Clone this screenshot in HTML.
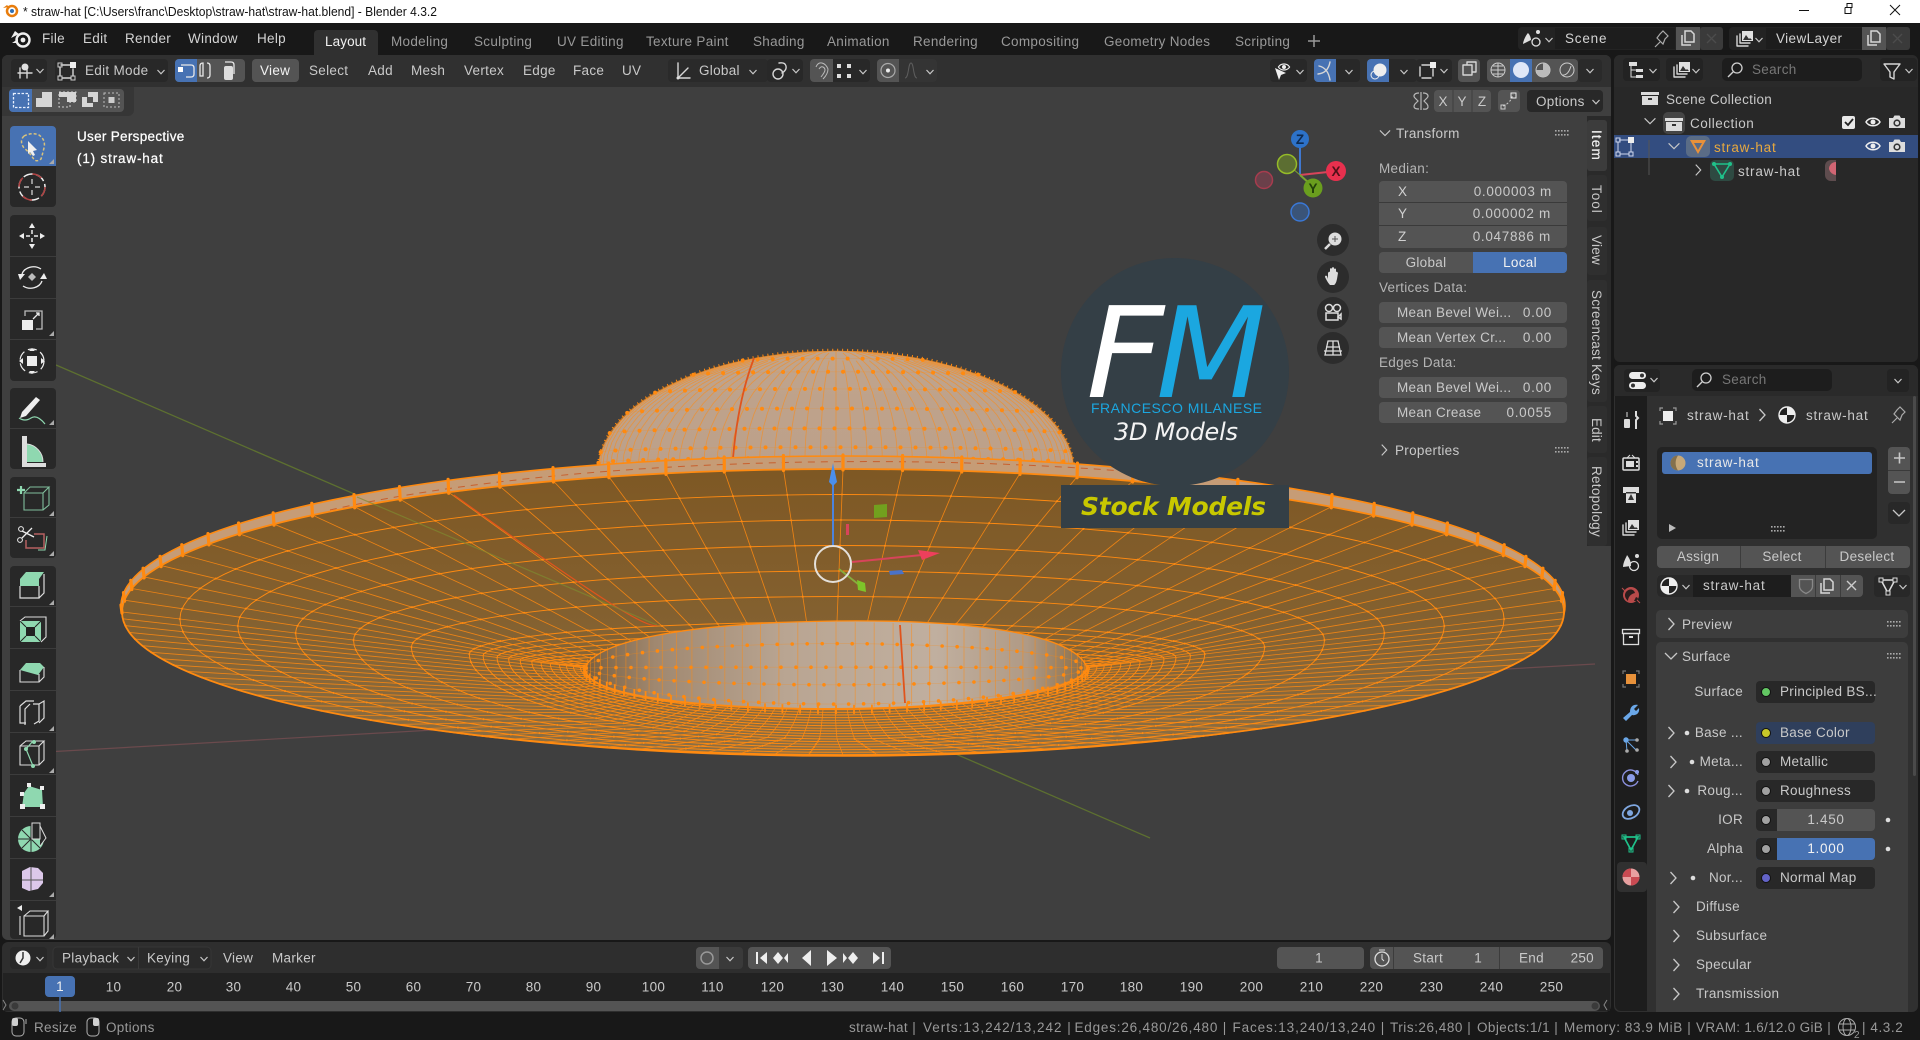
<!DOCTYPE html>
<html><head><meta charset="utf-8"><title>straw-hat - Blender 4.3.2</title>
<style>
html,body{margin:0;padding:0;background:#181818;width:1920px;height:1040px;overflow:hidden}
svg{display:block}
text{font-family:"Liberation Sans",sans-serif;font-size:13.5px;letter-spacing:.3px;fill:#c9c9c9;white-space:pre}
.e{text-anchor:end}.m{text-anchor:middle}
.w{fill:#f2f2f2}.d{fill:#999}.s{fill:#777}
.b{fill:#545454}.k{fill:#282828}.f{fill:#1d1d1d}
.ic{fill:none;stroke:#d6d6d6;stroke-width:1.4;stroke-linejoin:round;stroke-linecap:round}
.ft{fill:#e0e0e0;stroke:none}
.g{fill:#8fd8b0;stroke:none}
</style></head><body>
<svg xmlns="http://www.w3.org/2000/svg" width="1920" height="1040" viewBox="0 0 1920 1040">
<defs>
<path id="cd" d="M-3.5-2 0 1.8 3.5-2" fill="none" stroke="#c8c8c8" stroke-width="1.2"/>
<path id="cr" d="M-2.5-6 3 0-2.5 6" fill="none" stroke="#c8c8c8" stroke-width="1.3"/>
<path id="cv" d="M-6-3 0 3 6-3" fill="none" stroke="#c8c8c8" stroke-width="1.3"/>
<g id="grip" fill="#aaa"><rect x="0" y="0" width="1.6" height="1.6"/><rect x="3" y="0" width="1.6" height="1.6"/><rect x="6" y="0" width="1.6" height="1.6"/><rect x="9" y="0" width="1.6" height="1.6"/><rect x="12" y="0" width="1.6" height="1.6"/><rect x="0" y="4" width="1.6" height="1.6"/><rect x="3" y="4" width="1.6" height="1.6"/><rect x="6" y="4" width="1.6" height="1.6"/><rect x="9" y="4" width="1.6" height="1.6"/><rect x="12" y="4" width="1.6" height="1.6"/></g>
<g id="copy"><path d="M-6-3v10h9M-3-7h6l3 3v8h-9z" fill="none" stroke="#d6d6d6" stroke-width="1.5"/></g>
<g id="box"><path d="M-9-6h18v3h-18z" fill="#dcdcdc"/><path d="M-8-2h16v9h-16z" fill="#dcdcdc"/><rect x="-2" y="0" width="4" height="2" fill="#333"/></g>
<g id="mat"><circle r="8" fill="#eee"/><path d="M0-8A8 8 0 0 0-8 0H0V8A8 8 0 0 0 8 0H0Z" fill="#222"/><circle r="8" fill="none" stroke="#eee" stroke-width="1.4"/></g>
<g id="pin"><path d="M-7 8-2 3M-5-1 1 5 3 0 6-3 1-8-2-5Z" fill="none" stroke="#aaa" stroke-width="1.2"/></g>
<g id="layers"><path class="ic" d="M-8-3v10h11M-5-5v9h10" stroke-width="1.3"/><rect x="-3" y="-8" width="11" height="10" fill="#e0e0e0"/><path d="M-2 1 1-4 4 0 5-1 7 1Z" fill="#333"/></g>
<g id="eye"><path d="M-7 0C-4-5 4-5 7 0 4 5-4 5-7 0Z" fill="none" stroke="#eee" stroke-width="1.5"/><circle r="2.5" fill="#eee"/></g>
<g id="cam"><path d="M-8-4h4l1.500-2.500h5L4-4h4V6H-8Z" fill="#ddd"/><circle cy="1" r="3.600" fill="#333"/><circle cy="1" r="2" fill="#ddd"/></g>
<g id="filter"><path class="ic" d="M-8-7H8L2 1V8L-2 6V1Z" stroke-width="1.300"/></g>
<g id="search"><circle cx="2" cy="-2" r="5" fill="none" stroke="#d0d0d0" stroke-width="1.300"/><path d="M-2 2-7 7" stroke="#d0d0d0" stroke-width="1.400"/></g>
<g id="corner"><path d="M0 5 5 5 5 0Z" fill="#aaa"/></g>
<linearGradient id="hole" x1="0" x2="1" y1="0" y2="0"><stop offset="0" stop-color="#7a5f3e"/><stop offset=".14" stop-color="#a08870"/><stop offset=".4" stop-color="#b9a592"/><stop offset=".7" stop-color="#c0af9f"/><stop offset=".88" stop-color="#b09a85"/><stop offset="1" stop-color="#8a6d46"/></linearGradient>
<linearGradient id="under" x1="0" x2="0" y1="0" y2="1"><stop offset="0" stop-color="#7e5824"/><stop offset=".5" stop-color="#83602f"/><stop offset="1" stop-color="#8c6f45"/></linearGradient>
<linearGradient id="dome" x1="0" x2="0" y1="0" y2="1"><stop offset="0" stop-color="#c0a48c"/><stop offset="1" stop-color="#bca08a"/></linearGradient>
</defs>

<!-- base -->
<rect width="1920" height="1040" fill="#181818"/>
<rect width="1920" height="23" fill="#fff"/>
<circle cx="12" cy="11" r="5" fill="none" stroke="#e87d0d" stroke-width="2.500"/><circle cx="12" cy="11" r="2" fill="#2f6fb5"/><path d="M3 8 9 7 7 5Z" fill="#e87d0d"/>
<text x="23" y="16" style="fill:#111;font-size:13px;letter-spacing:0" textLength="414" lengthAdjust="spacingAndGlyphs">* straw-hat [C:\Users\franc\Desktop\straw-hat\straw-hat.blend] - Blender 4.3.2</text>
<path d="M1799 10.500h10" stroke="#111"/><path d="M1845 7.500h7v-4h-5v4M1845 7.500v6h6v-6" fill="none" stroke="#111"/><path d="M1890 5 1900 15M1900 5 1890 15" stroke="#111"/>

<!-- top bar -->
<g transform="translate(21 39)"><circle cx="2" cy="1" r="6.500" fill="none" stroke="#eee" stroke-width="2.400"/><circle cx="2" cy="1" r="2.400" fill="#eee"/><path d="M-10-1-2-5-6-8ZM-9 4-3 0-3 4Z" fill="#eee"/></g>
<text x="42" y="43" style="fill:#d4d4d4">File</text><text x="83" y="43" style="fill:#d4d4d4">Edit</text><text x="125" y="43" style="fill:#d4d4d4">Render</text><text x="188" y="43" style="fill:#d4d4d4">Window</text><text x="257" y="43" style="fill:#d4d4d4">Help</text>
<path d="M314 55V34a4 4 0 0 1 4-4h56a4 4 0 0 1 4 4v21z" fill="#303030"/>
<text x="325" y="46" class="w" style="letter-spacing:.1px">Layout</text>
<g class="tabs"><text x="391" y="46" class="d">Modeling</text><text x="474" y="46" class="d">Sculpting</text><text x="557" y="46" class="d">UV Editing</text><text x="646" y="46" class="d">Texture Paint</text><text x="753" y="46" class="d">Shading</text><text x="827" y="46" class="d">Animation</text><text x="913" y="46" class="d">Rendering</text><text x="1001" y="46" class="d">Compositing</text><text x="1104" y="46" class="d">Geometry Nodes</text><text x="1235" y="46" class="d">Scripting</text></g>
<path d="M1308 41h12M1314 35v12" stroke="#999" stroke-width="1.500"/>
<!-- scene -->
<rect x="1518" y="27" width="205" height="23" rx="4" fill="#232323"/><rect x="1555" y="28" width="120" height="21" class="f"/><rect x="1676" y="27" width="24" height="23" class="b"/><rect x="1700" y="27" width="23" height="23" rx="3" fill="#3a3a3a"/>
<path d="M1523 44c0-3 3-9 5-11 2 2 3 5 3 7" fill="#e0e0e0"/><circle cx="1536" cy="42" r="4" fill="none" stroke="#e0e0e0" stroke-width="1.300"/><circle cx="1538" cy="32" r="2" fill="#e0e0e0"/><use href="#cd" x="1549" y="40"/>
<text x="1565" y="43" style="fill:#d4d4d4;letter-spacing:.8px">Scene</text><use href="#pin" x="1662" y="39"/><use href="#copy" x="1688" y="38"/><path d="M1707 34 1716 43M1716 34 1707 43" stroke="#4c4c4c" stroke-width="1.400"/>
<rect x="1729" y="27" width="181" height="23" rx="4" fill="#232323"/><rect x="1766" y="28" width="96" height="21" class="f"/><rect x="1862" y="27" width="24" height="23" class="b"/><rect x="1886" y="27" width="24" height="23" rx="3" fill="#3a3a3a"/>
<use href="#layers" x="1745" y="39"/><use href="#cd" x="1759" y="40"/><text x="1776" y="43" style="fill:#d4d4d4;letter-spacing:.4px">ViewLayer</text><use href="#copy" x="1874" y="38"/><path d="M1893 34 1902 43M1902 34 1893 43" stroke="#4c4c4c" stroke-width="1.400"/>

<!-- viewport -->
<rect x="2" y="55" width="1609" height="885" rx="6" fill="#3f3f3f"/>
<path d="M2 87V61a6 6 0 0 1 6-6H1605a6 6 0 0 1 6 6V87Z" fill="#303030"/>
<!-- axis lines -->
<path d="M56 365 1150 838" stroke="#5d7030" stroke-width="1.300"/><path d="M46 752 1595 664" stroke="#6b4a4d" stroke-width="1.200"/>
<g id="hat"></g>
<!-- object gizmo -->
<g id="gizmo">
<path d="M833 546V480" stroke="#4b83dd" stroke-width="2"/><path d="M833 463 837 482 833 486 829 482Z" fill="#4b8fec"/>
<path d="M852 562 922 555" stroke="#d8445a" stroke-width="2"/><path d="M918 550 940 553 922 560Z" fill="#ee3f5c"/>
<path d="M839 569 858 584" stroke="#87ac3d" stroke-width="1.800"/><path d="M857 580 865 583 866 592 858 590Z" fill="#7ec429"/>
<ellipse cx="833" cy="564" rx="18" ry="18" fill="none" stroke="#e4e0da" stroke-width="2"/>
<path d="M874 505 887 504 887 517 874 518Z" fill="#72a01e"/><rect x="846" y="524" width="3" height="11" fill="#d8445a"/><path d="M889 571 902 570 904 574 890 575Z" fill="#4a72c8"/>
</g>
<!-- FM logo -->
<circle cx="1175" cy="372" r="114" fill="#343f46"/><rect x="1061" y="485" width="228" height="43" fill="#343f46"/>
<text x="1086" y="397" style="font-family:'DejaVu Sans',sans-serif;font-style:italic;font-size:126px;letter-spacing:0;fill:#fff" textLength="78" lengthAdjust="spacingAndGlyphs">F</text>
<text x="1156" y="397" style="font-family:'DejaVu Sans',sans-serif;font-style:italic;font-size:126px;letter-spacing:0;fill:#1ba7e0" textLength="110" lengthAdjust="spacingAndGlyphs">M</text>
<text x="1091" y="413" style="font-size:14px;letter-spacing:1px;fill:#1ba7e0" textLength="172">FRANCESCO MILANESE</text>
<text x="1114" y="440" style="font-family:'DejaVu Sans',sans-serif;font-style:italic;font-size:24px;letter-spacing:0;fill:#f4f4f4" textLength="124">3D Models</text>
<text x="1081" y="515" style="font-family:'DejaVu Sans',sans-serif;font-style:italic;font-weight:bold;font-size:25px;letter-spacing:0;fill:#c8c800" textLength="185">Stock Models</text>

<!-- viewport header -->
<rect x="11" y="59" width="36" height="23" rx="4" class="k"/>
<g transform="translate(24 70)"><path class="ic" d="M-6 3H8M-4-2V8M3-2V8" stroke-width="1"/><circle cx="1" cy="-3" r="3.500" fill="#e0e0e0"/></g><use href="#cd" x="40" y="71"/>
<rect x="55" y="59" width="113" height="23" rx="4" class="k"/>
<g transform="translate(67 71)"><path class="ic" d="M-6-6H4M-7-4V5M6-2V5M-5 7H4" stroke-width="1"/><rect x="3" y="-9" width="6" height="6" fill="#eee"/><rect x="-9" y="-8" width="4" height="4" fill="none" stroke="#ccc"/><rect x="-9" y="5" width="4" height="4" fill="none" stroke="#ccc"/><rect x="4" y="5" width="4" height="4" fill="none" stroke="#ccc"/></g>
<text x="85" y="75">Edit Mode</text><use href="#cd" x="161" y="72"/>
<rect x="175" y="59" width="70" height="23" rx="4" class="b"/><path d="M179 59h18v23h-18a4 4 0 0 1-4-4V63a4 4 0 0 1 4-4z" fill="#4772b3"/>
<g fill="none" stroke="#e8e8e8" stroke-width="1.300"><path d="M181 65h10q3 0 3 3v6q0 3-3 3h-5"/><rect x="178" y="67" width="5" height="5" fill="#fff" stroke="none"/><path d="M203 63q-3 0-3 3v10h3zM207 63q3 0 3 3v9q0 3-3 3" /><path d="M225 62h6q3 0 3 3v9"/></g><rect x="224" y="66" width="9" height="14" rx="2" fill="#ddd"/>
<rect x="252" y="59" width="47" height="23" rx="4" class="b"/><text x="260" y="75" class="w">View</text>
<text x="309" y="75">Select</text><text x="368" y="75">Add</text><text x="411" y="75">Mesh</text><text x="464" y="75">Vertex</text><text x="523" y="75">Edge</text><text x="573" y="75">Face</text><text x="622" y="75">UV</text>
<rect x="668" y="59" width="100" height="23" rx="4" fill="#2a2a2a"/>
<path class="ic" d="M678 63V78H690M678 78 688 68" stroke-width="1"/><circle cx="678" cy="78" r="1.500" fill="#ddd"/><text x="699" y="75">Global</text><use href="#cd" x="753" y="72"/>
<rect x="767" y="59" width="36" height="23" rx="4" class="k"/><circle cx="778" cy="74" r="5" class="ic" stroke-width="1"/><path class="ic" d="M779 63q6-1 7 3t-4 7" stroke-width="1"/><use href="#cd" x="796" y="71"/>
<rect x="810" y="59" width="60" height="23" rx="4" class="k"/><path d="M814 59h19v23h-19a4 4 0 0 1-4-4V63a4 4 0 0 1 4-4z" class="b"/>
<path d="M816 67q2-5 6-4t6 6q0 5-5 10M819 69q2-3 4-2t2 3-4 7" stroke="#bbb" stroke-width="1" fill="none"/><rect x="837" y="64" width="4" height="4" fill="#ddd"/><rect x="847" y="64" width="4" height="4" fill="#ddd"/><rect x="837" y="74" width="4" height="4" fill="#ddd"/><rect x="847" y="74" width="4" height="4" fill="#ddd"/><use href="#cd" x="863" y="72"/>
<rect x="877" y="59" width="60" height="23" rx="4" fill="#343434"/><path d="M881 59h18v23h-18a4 4 0 0 1-4-4V63a4 4 0 0 1 4-4z" class="b"/><circle cx="888" cy="70.500" r="7" fill="none" stroke="#aaa" stroke-width="1.200"/><circle cx="888" cy="70.500" r="2" fill="#eee"/><path d="M905 78c4 0 3-15 6-15s2 15 6 15" fill="none" stroke="#5e5e5e"/><use href="#cd" x="930" y="72"/>
<!-- header right -->
<rect x="1270" y="59" width="37" height="23" rx="4" class="k"/><use href="#eye" transform="translate(1284 67) scale(.8)"/><path d="M1275 68 1286 73 1281 75 1279 80Z" fill="#eee"/><use href="#cd" x="1300" y="72"/>
<rect x="1314" y="59" width="46" height="23" rx="4" class="k"/><path d="M1318 59h18v23h-18a4 4 0 0 1-4-4V63a4 4 0 0 1 4-4z" fill="#4772b3"/><path class="ic" d="M1318 74q10-1 12-12M1319 66q9 2 11 14" stroke-width="1"/><use href="#cd" x="1349" y="72"/>
<rect x="1367" y="59" width="50" height="23" rx="4" class="k"/><path d="M1371 59h18v23h-18a4 4 0 0 1-4-4V63a4 4 0 0 1 4-4z" fill="#4772b3"/><circle cx="1380" cy="70" r="6.500" fill="#eee"/><circle cx="1375" cy="75" r="4" fill="none" stroke="#eee"/><use href="#cd" x="1404" y="72"/>
<rect x="1416" y="59" width="36" height="23" rx="4" class="k"/><g transform="translate(1427 71)"><path class="ic" d="M-5-6H4M-7-4V5M6-2V5M-5 7H4" stroke-width="1"/><rect x="3" y="-9" width="6" height="6" fill="#eee"/></g><use href="#cd" x="1444" y="71"/>
<rect x="1458" y="59" width="22" height="23" rx="4" class="b"/><path class="ic" d="M1463 65h9v10h-9zM1467 65v-3h9v10h-4" stroke-width="1"/>
<rect x="1487" y="59" width="91" height="23" rx="4" class="b"/><rect x="1510" y="59" width="22" height="23" fill="#4772b3"/>
<g fill="none" stroke="#ccc"><circle cx="1498" cy="70" r="7"/><path d="M1491 70h14M1498 63v14M1493 66h10M1493 74h10"/><circle cx="1543" cy="70" r="7"/><circle cx="1567" cy="70" r="7"/></g><circle cx="1521" cy="70" r="8" fill="#dfe7f7"/><path d="M1543 63a7 7 0 0 1 0 14 7 7 0 0 1-7-7h7z" fill="#bbb"/><path d="M1562 75q6 1 9-9" stroke="#ccc" fill="none"/>
<rect x="1578" y="59" width="24" height="23" rx="4" fill="#2a2a2a"/><use href="#cd" x="1590" y="71"/>
<!-- tool settings -->
<path d="M2 87H134V110a6 6 0 0 1-6 6H2Z" fill="#363636"/>
<rect x="9" y="89" width="115" height="23" rx="4" class="b"/><path d="M13 89h19v23H13a4 4 0 0 1-4-4V93a4 4 0 0 1 4-4z" fill="#4772b3"/>
<rect x="13.500" y="93.500" width="15" height="14" fill="none" stroke="#e8f0ff" stroke-width="1.300" stroke-dasharray="2.500 1.500"/>
<path d="M36 107V98H42V92H52V107Z" fill="#d6d6d6"/><path d="M59 92H76V102H70V107H59Z" fill="none" stroke="#ccc" stroke-dasharray="2 2"/><path d="M59 92H76V102H67V97H59Z" fill="#d6d6d6"/><path d="M82 97h6v-5h10v10h-5v5h-11z" fill="#d6d6d6"/><rect x="87" y="97" width="6" height="6" fill="#545454"/><rect x="104" y="93" width="15" height="14" fill="none" stroke="#bbb" stroke-dasharray="2 2"/><rect x="108.500" y="97" width="6" height="6" fill="#ccc"/>
<!-- mirror / options -->
<g transform="translate(1421 101)"><path d="M-2-8c-5 0-6 3-4 5L-3 0-6 3c-2 3-1 5 4 5M2-8c5 0 6 3 4 5L3 0 6 3c2 3 1 6-4 5M0-9V9" fill="none" stroke="#b8b8b8" stroke-width="1.200"/></g>
<rect x="1434" y="90" width="57" height="22" rx="4" class="b"/><path d="M1453 90v22M1472 90v22" stroke="#3e3e3e"/><text x="1443" y="106" class="m" style="letter-spacing:0">X</text><text x="1462" y="106" class="m" style="letter-spacing:0">Y</text><text x="1482" y="106" class="m" style="letter-spacing:0">Z</text>
<rect x="1498" y="90" width="22" height="22" rx="4" class="b"/><path d="M1503 106q8-3 10-12" fill="none" stroke="#ccc" stroke-dasharray="2 2"/><rect x="1511" y="93" width="5" height="5" fill="none" stroke="#eee"/><rect x="1501" y="105" width="4" height="4" fill="none" stroke="#ccc"/>
<rect x="1527" y="90" width="76" height="22" rx="4" class="k"/><text x="1536" y="106">Options</text><use href="#cd" x="1596" y="102"/>
<!-- Viewport overlay text -->
<text x="77" y="141" style="fill:#fff;stroke:#fff;stroke-width:.25px">User Perspective</text>
<text x="77" y="163" style="fill:#fff;stroke:#fff;stroke-width:.25px" textLength="86">(1) straw-hat</text>
<!-- nav gizmo -->
<path d="M1300 175V145" stroke="#3f78d0" stroke-width="2"/><path d="M1300 175 1328 172" stroke="#d8445a" stroke-width="2"/><path d="M1300 175 1310 184" stroke="#7aa530" stroke-width="2"/><path d="M1300 175 1292 168" stroke="#7aa530" stroke-width="1"/>
<circle cx="1264" cy="180" r="8.500" fill="#6b404a" stroke="#a73c4e" stroke-width="1.500"/><circle cx="1287" cy="164" r="9.500" fill="#5c6e32" stroke="#95bb28" stroke-width="1.500"/><circle cx="1300" cy="212" r="9" fill="#3a5478" stroke="#3a78d6" stroke-width="1.500"/>
<circle cx="1300" cy="139" r="9" fill="#2d72c8"/><text x="1300" y="144" class="m" style="fill:#0d2a50;font-weight:bold;letter-spacing:0">Z</text>
<circle cx="1336" cy="171" r="10" fill="#e8304e"/><text x="1336" y="176" class="m" style="fill:#501018;font-weight:bold;letter-spacing:0">X</text>
<circle cx="1313" cy="188" r="9.500" fill="#6a9e1e"/><text x="1313" y="193" class="m" style="fill:#22400a;font-weight:bold;letter-spacing:0">Y</text>
<circle cx="1333" cy="240" r="16" fill="#2c2c2c"/><circle cx="1335" cy="239" r="6.500" fill="#ddd"/><path d="M1335 236v6M1332 239h6" stroke="#555"/><path d="M1330 244 1325 249" stroke="#ddd" stroke-width="2.500"/>
<circle cx="1333" cy="277" r="16" fill="#2c2c2c"/><path d="M1328 279v-6q1-2 2-1v-3q1-2 2 0v-1q1-2 2 0v1q1-1 2 0v3q1-1 2 1l-1 6q-1 5-3 6h-4q-2-2-4-6l-1-2q0-2 2-1z" fill="#ddd"/>
<circle cx="1333" cy="313" r="16" fill="#2c2c2c"/><g fill="none" stroke="#ddd" stroke-width="1.500"><circle cx="1329" cy="308" r="3.500"/><circle cx="1337" cy="308" r="3.500"/><rect x="1326" y="313" width="12" height="7"/><path d="M1341 314v5l-3-2z"/></g>
<circle cx="1333" cy="348" r="16" fill="#2c2c2c"/><path d="M1328 341h10l3 14h-16zM1333 341v14M1326 347h14M1324 351h18" fill="none" stroke="#ddd" stroke-width="1.300"/>
<!-- N panel -->
<use href="#cv" transform="translate(1385 133) scale(.85)"/><text x="1396" y="138">Transform</text><use href="#grip" x="1555" y="130"/>
<text x="1379" y="173" style="fill:#b5b5b5">Median:</text>
<rect x="1379" y="181" width="188" height="67" rx="4" class="b"/><path d="M1379 202.500h188M1379 225.500h188" stroke="#3a3a3a"/>
<text x="1398" y="196" style="fill:#d0d0d0">X</text><text x="1552" y="196" class="e" style="letter-spacing:.7px">0.000003 m</text>
<text x="1398" y="218" style="fill:#d0d0d0">Y</text><text x="1551" y="218" class="e" style="letter-spacing:.7px">0.000002 m</text>
<text x="1398" y="241" style="fill:#d0d0d0">Z</text><text x="1551" y="241" class="e" style="letter-spacing:.7px">0.047886 m</text>
<rect x="1379" y="252" width="188" height="21" rx="4" class="b"/><path d="M1473 252h90a4 4 0 0 1 4 4v13a4 4 0 0 1-4 4h-90z" fill="#4772b3"/>
<text x="1426" y="267" class="m">Global</text><text x="1520" y="267" class="m w">Local</text>
<text x="1379" y="292" style="fill:#b5b5b5">Vertices Data:</text>
<rect x="1379" y="302" width="188" height="21" rx="4" class="b"/><text x="1397" y="317">Mean Bevel Wei...</text><text x="1552" y="317" class="e" style="letter-spacing:.7px">0.00</text>
<rect x="1379" y="327" width="188" height="21" rx="4" class="b"/><text x="1397" y="342">Mean Vertex Cr...</text><text x="1552" y="342" class="e" style="letter-spacing:.7px">0.00</text>
<text x="1379" y="367" style="fill:#b5b5b5">Edges Data:</text>
<rect x="1379" y="377" width="188" height="21" rx="4" class="b"/><text x="1397" y="392">Mean Bevel Wei...</text><text x="1552" y="392" class="e" style="letter-spacing:.7px">0.00</text>
<rect x="1379" y="402" width="188" height="21" rx="4" class="b"/><text x="1397" y="417">Mean Crease</text><text x="1552" y="417" class="e" style="letter-spacing:.7px">0.0055</text>
<use href="#cr" transform="translate(1384 450) scale(.9)"/><text x="1395" y="455">Properties</text><use href="#grip" x="1555" y="447"/>
<!-- side tabs -->
<rect x="1587" y="116" width="24" height="430" fill="#2a2a2a"/>
<rect x="1587" y="120" width="20" height="51" rx="3" fill="#3c3c3c"/><rect x="1587" y="175" width="20" height="46" rx="3" fill="#2f2f2f"/><rect x="1587" y="227" width="20" height="48" rx="3" fill="#2f2f2f"/><rect x="1587" y="280" width="20" height="122" rx="3" fill="#2f2f2f"/><rect x="1587" y="406" width="20" height="47" rx="3" fill="#2f2f2f"/><rect x="1587" y="457" width="20" height="89" rx="3" fill="#2f2f2f"/>
<g style="letter-spacing:.3px">
<text transform="translate(1592 130) rotate(90)" class="w" style="stroke:#f2f2f2;stroke-width:.2px" textLength="30">Item</text>
<text transform="translate(1592 185) rotate(90)" textLength="28">Tool</text>
<text transform="translate(1592 235) rotate(90)" textLength="30">View</text>
<text transform="translate(1592 290) rotate(90)" textLength="105">Screencast Keys</text>
<text transform="translate(1592 418) rotate(90)" textLength="24">Edit</text>
<text transform="translate(1592 466) rotate(90)" textLength="71">Retopology</text>
</g>
<!-- toolbar -->
<g>
<path d="M14 126h38a4 4 0 0 1 4 4v36H10v-36a4 4 0 0 1 4-4z" fill="#4772b3"/>
<path d="M10 166h46v37a4 4 0 0 1-4 4H14a4 4 0 0 1-4-4z" fill="#282828"/>
<rect x="10" y="215" width="46" height="166" rx="4" class="k"/><path d="M10 256.500h46M10 298.500h46M10 339.500h46" stroke="#3c3c3c"/>
<rect x="10" y="388" width="46" height="81" rx="4" class="k"/><path d="M10 428.500h46" stroke="#3c3c3c"/>
<rect x="10" y="477" width="46" height="81" rx="4" class="k"/><path d="M10 517.500h46" stroke="#3c3c3c"/>
<rect x="10" y="566" width="46" height="373" rx="4" class="k"/><path d="M10 606.500h46M10 648.500h46M10 690.500h46M10 732.500h46M10 774.500h46M10 816.500h46M10 858.500h46M10 900.500h46" stroke="#3c3c3c"/>
<path d="M24 136q8-4 15-1 7 5 5 13t-3 11q-5 4-8-1t-9-10q-5-7 0-12z" fill="none" stroke="#d8c27c" stroke-width="1.500" stroke-dasharray="3 2"/><path d="M28 141 37 150 33 151 35 155 33 156 30 152 28 154Z" fill="#f0f0f0"/><use href="#corner" x="49" y="159"/>
<circle cx="32" cy="187" r="13" fill="none" stroke="#eee" stroke-width="1.500" stroke-dasharray="10 3"/><circle cx="32" cy="187" r="13" fill="none" stroke="#b04040" stroke-width="1.500" stroke-dasharray="10 10.400"/><path d="M32 179v5M32 190v5M24 187h5M35 187h5" stroke="#bbb" stroke-width="1.500"/>
<path d="M32 223l-3 5h6zM32 249l-3-5h6zM19 236l5-3v6zM45 236l-5-3v6z" fill="#eee"/><path d="M32 230v4M32 238v4M26 236h4M34 236h4" stroke="#eee" stroke-width="1.500"/>
<path d="M22 274a12 10 0 0 1 19-5M42 281a12 10 0 0 1-19 5" fill="none" stroke="#eee" stroke-width="1.300"/><path d="M20 280l-2-6h7zM44 273l-4 6h7z" fill="#eee"/><path d="M32 273l4 4-4 4-4-4z" fill="#bbb"/>
<rect x="22" y="320" width="11" height="10" fill="#eee"/><path d="M25 316v-5h17v18h-6" fill="none" stroke="#bbb" stroke-width="1.300"/><path d="M33 319l6-6M36 313h3v3" fill="none" stroke="#eee" stroke-width="1.300"/><use href="#corner" x="49" y="331"/>
<circle cx="32" cy="361" r="12" fill="none" stroke="#eee" stroke-width="1.200" stroke-dasharray="9 4"/><rect x="27" y="356" width="10" height="10" fill="#eee"/><path d="M32 348l-3 3h6zM32 374l-3-3h6zM19 361l4-3v6zM45 361l-4-3v6z" fill="#eee"/>
<path d="M36 397l4 3-14 16-6 2 2-6z" fill="#eee"/><path d="M19 418q6 4 12 0t14 6" fill="none" stroke="#8fd8b0" stroke-width="1.200"/><use href="#corner" x="49" y="420"/>
<path d="M22 436h5v27h-5zM22 463h24v4H22z" fill="#ddd"/><path d="M27 462v-18a18 18 0 0 1 16 18z" fill="#8fd8b0"/><path d="M27 444a18 18 0 0 1 16 18" fill="none" stroke="#ddd"/>
<g transform="translate(0 3)"><path d="M24 490h19v17H24zM24 490l6-6h19l-6 6M43 507l6-5v-18" fill="none" stroke="#8fd8b0" stroke-width="1.100" opacity=".85"/><path d="M17 487h8M21 483v8" stroke="#8fd8b0" stroke-width="2.200"/></g><use href="#corner" x="49" y="511"/>
<g transform="translate(0 4)"><path d="M22 527l12 6M32 524l-10 10" stroke="#eee" stroke-width="1.300"/><circle cx="20" cy="536" r="2.400" fill="none" stroke="#eee"/><circle cx="21" cy="525" r="2.400" fill="none" stroke="#eee"/><path d="M34 530h10v14H26v-8" fill="none" stroke="#b56060" stroke-width="1.500"/><path d="M38 546h7l2-14" fill="none" stroke="#8fd8b0"/></g><use href="#corner" x="49" y="551"/>
<path d="M20 579 26 572H44L39 579V586H20Z" fill="#8fd8b0"/><path d="M20 586V598H39V586M44 574V593L39 598" fill="none" stroke="#ddd" stroke-width="1.200"/><use href="#corner" x="49" y="600"/>
<rect x="20" y="621" width="21" height="21" fill="#8fd8b0"/><rect x="26" y="627" width="9" height="9" fill="#222"/><path d="M20 621l6 6M41 621l-6 6M20 642l6-6M41 642l-6-6" stroke="#222"/><path d="M20 621l5-4h21v20l-5 5" fill="none" stroke="#ddd" stroke-width="1.100"/>
<g transform="translate(0 -2)"><path d="M20 672l6-7h14l4 4-6 8z" fill="#8fd8b0"/><path d="M20 672v12h19v-8M44 669v10l-5 5" fill="none" stroke="#ddd" stroke-width="1.100"/></g>
<path d="M20 706v17h6M30 704l-5 5v16M33 704h6v17l-5 3M39 704l5-3v17l-5 5M20 706l6-5h8" fill="none" stroke="#ddd" stroke-width="1.200"/><use href="#corner" x="49" y="726"/>
<path d="M20 746h19v19H20zM20 746l6-5h18l-5 5M39 765l5-5v-19" fill="none" stroke="#ddd" stroke-width="1.100"/><path d="M26 749 33 741M26 749 33 766" stroke="#8fd8b0" stroke-width="1.200"/><circle cx="26" cy="749" r="2" fill="#8fd8b0"/><circle cx="34" cy="742" r="2" fill="#8fd8b0"/><circle cx="33" cy="766" r="2" fill="#8fd8b0"/><use href="#corner" x="49" y="768"/>
<path d="M22 807l2-14 5-7 13 4 1 17z" fill="#8fd8b0"/><g fill="#eee"><rect x="20" y="804" width="5" height="5"/><rect x="40" y="804" width="5" height="5"/><rect x="20" y="792" width="4" height="4"/><rect x="27" y="783" width="4" height="4"/><rect x="40" y="786" width="4" height="4"/></g>
<circle cx="31" cy="839" r="13" fill="#8fd8b0"/><path d="M31 826v26M18 839h26M22 830l18 18M22 848l18-18" stroke="#2a2a2a"/><path d="M32 823h8v16h-8zM40 826l6 12-6 8" fill="#282828" stroke="#ddd"/>
<g transform="translate(0 -4)"><path d="M22 875l8-4 8 1 5 5 0 10-5 6-9 2-7-3z" fill="#dcc8ea"/><path d="M22 884h21M31 871v24" stroke="#555"/></g><use href="#corner" x="49" y="892"/>
<path d="M24 916h20v20H24zM24 916l6-5h18l-4 5M44 936l4-5v-20M20 916v19" fill="none" stroke="#ddd" stroke-width="1.100"/><path d="M17 908l5-3v6z" fill="#eee"/><use href="#corner" x="49" y="934"/>
</g>

<!-- outliner -->
<rect x="1614" y="55" width="304" height="307" rx="6" fill="#282828"/>
<path d="M1614 135h304v23h-304z" fill="#334d80"/>
<path d="M1614 62a6 6 0 0 1 6-7h292a6 6 0 0 1 6 7V87H1614Z" fill="#2a2a2a"/>
<rect x="1623" y="58" width="37" height="23" rx="4" fill="#232323"/><g fill="#ddd"><rect x="1629" y="62" width="8" height="4"/><rect x="1636" y="69" width="7" height="3"/><rect x="1636" y="75" width="7" height="3"/></g><path d="M1631 66v11h5M1631 70h5" stroke="#ddd" fill="none"/><use href="#cd" x="1653" y="71"/>
<rect x="1666" y="58" width="37" height="23" rx="4" fill="#232323"/><use href="#layers" x="1682" y="70"/><use href="#cd" x="1696" y="71"/>
<rect x="1722" y="58" width="140" height="23" rx="5" class="f"/><use href="#search" x="1735" y="70"/><text x="1752" y="74" class="s">Search</text>
<rect x="1880" y="58" width="37" height="23" rx="4" fill="#232323"/><use href="#filter" x="1892" y="71"/><use href="#cd" x="1909" y="71"/>
<use href="#box" x="1650" y="98"/><text x="1666" y="104">Scene Collection</text>
<use href="#cv" transform="translate(1650 121) scale(.9)"/><rect x="1663" y="112" width="22" height="22" rx="5" fill="#454545"/><use href="#box" x="1674" y="124"/><text x="1690" y="128" textLength="64">Collection</text>
<rect x="1842" y="116" width="13" height="13" rx="2" fill="#e8e8e8"/><path d="M1845 122l3 3 5-6" fill="none" stroke="#222" stroke-width="1.800"/><use href="#eye" x="1873" y="122"/><use href="#cam" x="1897" y="122"/>
<g transform="translate(1625 146)"><path d="M-6-6H3M-7-4V6M6-3V6M-5 8H4" fill="none" stroke="#cfd8ee" stroke-width="1"/><rect x="3" y="-9" width="6" height="6" fill="#eee"/><rect x="-9" y="-8" width="4" height="4" fill="none" stroke="#cfd8ee"/><rect x="-9" y="6" width="4" height="4" fill="none" stroke="#cfd8ee"/><rect x="4" y="6" width="4" height="4" fill="none" stroke="#cfd8ee"/></g>
<path d="M1649 140v35" stroke="#555"/>
<use href="#cv" transform="translate(1674 146) scale(.9)"/><rect x="1686" y="136" width="24" height="21" rx="5" fill="#5a6c86"/><path d="M1690 140h16l-8 14zM1694 143l4 7 4-7z" fill="#e8913a" fill-rule="evenodd"/>
<text x="1714" y="152" style="fill:#e8a93e" textLength="62">straw-hat</text><use href="#eye" x="1873" y="146"/><use href="#cam" x="1897" y="146"/>
<use href="#cr" transform="translate(1698 170) scale(.9)"/><rect x="1710" y="160" width="24" height="21" rx="5" fill="#2e4a42"/><path d="M1714 164h16l-8 13zM1714 164l8 13 8-13" fill="none" stroke="#1fc18a" stroke-width="1.600"/><circle cx="1714" cy="164" r="2" fill="#1fc18a"/><circle cx="1730" cy="164" r="2" fill="#1fc18a"/><circle cx="1722" cy="177" r="2" fill="#1fc18a"/>
<text x="1738" y="176" textLength="62">straw-hat</text>
<path d="M1836 160h-5a6 6 0 0 0-6 6v9a6 6 0 0 0 6 6h5z" fill="#5e4c4e"/><path d="M1836 162a7 7 0 0 0-7 7 8 8 0 0 0 7 6z" fill="#d26573"/>

<!-- properties -->
<rect x="1614" y="365" width="304" height="647" rx="6" fill="#303030"/>
<path d="M1615 396h32v615h-26a6 6 0 0 1-6-6z" fill="#1d1d1d"/>
<path d="M1614 372a6 6 0 0 1 6-7h292a6 6 0 0 1 6 7V396H1614Z" fill="#2a2a2a"/>
<rect x="1624" y="369" width="36" height="23" rx="4" fill="#232323"/><rect x="1629" y="372" width="17" height="7" rx="3.500" fill="#eee"/><rect x="1629" y="382" width="17" height="7" rx="3.500" fill="#eee"/><circle cx="1642" cy="375.500" r="2" fill="#333"/><circle cx="1633" cy="385.500" r="2" fill="#333"/><use href="#cd" x="1654" y="380"/>
<rect x="1692" y="369" width="140" height="22" rx="5" class="f"/><use href="#search" x="1704" y="380"/><text x="1722" y="384" class="s">Search</text>
<rect x="1887" y="369" width="22" height="23" rx="4" fill="#232323"/><use href="#cd" x="1898" y="381"/>
<!-- tab icons -->
<rect x="1617" y="862" width="30" height="30" rx="4" fill="#303030"/>
<g transform="translate(1631 420)"><path d="M5-9v5l2 2-2 2v9" stroke="#ddd" fill="none" stroke-width="2"/><path d="M-4-8v5" stroke="#ddd"/><rect x="-7" y="-1" width="6" height="9" rx="1" fill="#ddd"/></g>
<g transform="translate(1631 463)"><rect x="-8" y="-5" width="16" height="12" rx="1" fill="none" stroke="#ddd" stroke-width="1.500"/><path d="M-4-5-1-8M4-5 1-8" stroke="#ddd"/><rect x="-5" y="-2" width="8" height="6" fill="#ddd"/><rect x="5" y="-2" width="2" height="2" fill="#ddd"/><rect x="5" y="2" width="2" height="2" fill="#ddd"/></g>
<g transform="translate(1631 495)"><path d="M-8-8H8V-2H5V8H-5V-2H-8Z" fill="#ddd"/><path d="M-3 5 0-1 3 5Z" fill="#333"/><rect x="-5" y="-3" width="10" height="1.500" fill="#333"/></g>
<use href="#layers" x="1631" y="528"/>
<g transform="translate(1631 562)"><path d="M-8 5C-8 0-4-6-4-7-1-3 0 0 0 4Z" fill="#ddd"/><circle cx="3" cy="4" r="4.500" fill="none" stroke="#ddd" stroke-width="1.300"/><circle cx="6" cy="-6" r="2" fill="#ddd"/></g>
<g transform="translate(1631 595)"><circle r="8" fill="#b94a4a"/><path d="M-5-3C-2-7 3-6 4-2-1-1-3 3-3 6-6 3-7 0-5-3ZM3 6 5 2 7 3 6 6Z" fill="#2a1c1c"/><path d="M-9-7-6-4M9 8 6 5" stroke="#b94a4a"/></g>
<g transform="translate(1631 637)"><rect x="-8.500" y="-7.500" width="17" height="4" fill="none" stroke="#ddd" stroke-width="1.300"/><rect x="-7.500" y="-3.500" width="15" height="11" fill="none" stroke="#ddd" stroke-width="1.300"/><rect x="-2" y="-1" width="4" height="2" fill="#ddd"/></g>
<g transform="translate(1631 679)"><rect x="-5" y="-5" width="10" height="10" fill="#e8913a"/><path d="M-8-5V-8H-5M5-8H8V-5M-8 5V8H-5M5 8H8V5" fill="none" stroke="#777" stroke-width="1.200"/></g>
<g transform="translate(1631 712)"><path d="M-8 6-1 0C-1-5 2-8 7-7L3-3 5-1 8-4C9 1 5 4 1 3L-5 9Z" fill="#6aa7e8"/></g>
<g transform="translate(1631 745)"><path d="M-5-5 5-5M-5-5-4 6M-5-5 5 5" stroke="#6aa7e8" stroke-width="1"/><circle cx="-5" cy="-5" r="2.700" fill="#6aa7e8"/><circle cx="6" cy="-5" r="1.800" fill="#aaa"/><circle cx="-4" cy="6" r="1.800" fill="#aaa"/><circle cx="6" cy="5" r="1.800" fill="#aaa"/></g>
<g transform="translate(1631 778)"><path d="M7-3A8 8 0 1 0 7 3" fill="none" stroke="#8a8fdc" stroke-width="1.400"/><circle r="4" fill="#8a9be8"/><circle cx="6" cy="-6" r="2" fill="#8a9be8"/></g>
<g transform="translate(1631 812)"><ellipse rx="9" ry="6" transform="rotate(-30)" fill="none" stroke="#7fa7e0" stroke-width="1.800"/><circle cx="-1" cy="1" r="3" fill="#7fa7e0"/></g>
<g transform="translate(1631 843)"><path d="M-7-6H7L0 7ZM-7-6 0 7 7-6" fill="none" stroke="#1fc18a" stroke-width="1.700"/><rect x="-9" y="-8" width="4" height="4" fill="none" stroke="#1fc18a"/><rect x="5" y="-8" width="4" height="4" fill="none" stroke="#1fc18a"/><rect x="-2" y="5" width="4" height="4" fill="none" stroke="#1fc18a"/></g>
<g transform="translate(1631 877)"><circle r="8.500" fill="#e8a0a0"/><path d="M0-8.500A8.500 8.500 0 0 0-8.500 0H0V8.500A8.500 8.500 0 0 0 8.500 0H0Z" fill="#c94a52"/></g>
<!-- breadcrumb -->
<g transform="translate(1668 416)"><rect x="-5" y="-5" width="10" height="10" fill="#eee"/><path d="M-8-5V-8H-5M5-8H8V-5M-8 5V8H-5M5 8H8V5" fill="none" stroke="#999" stroke-width="1.200"/></g>
<text x="1687" y="420" textLength="62">straw-hat</text><use href="#cr" x="1762" y="415"/><use href="#mat" x="1787" y="415"/><text x="1806" y="420" textLength="62">straw-hat</text><use href="#pin" x="1899" y="415"/>
<rect x="1657" y="447" width="220" height="92" rx="5" fill="#232323"/><rect x="1662" y="452" width="210" height="22" rx="3" fill="#4772b3"/>
<circle cx="1678" cy="463" r="7.500" fill="#c7a878"/><path d="M1678 455.500a7.500 7.500 0 0 0 0 15 13 13 0 0 1 0-15z" fill="#84704c"/><text x="1697" y="467" style="fill:#e8e8e8" textLength="62">straw-hat</text>
<path d="M1669 524v8l7-4z" fill="#bbb"/><use href="#grip" x="1771" y="526"/>
<rect x="1888" y="447" width="22" height="47" rx="4" class="b"/><path d="M1888 470.500h22" stroke="#3a3a3a"/><path d="M1894 458h11M1899.500 452.500v11M1894 482h11" stroke="#c8c8c8" stroke-width="1.600"/>
<rect x="1888" y="502" width="22" height="22" rx="4" class="k"/><use href="#cv" x="1899" y="513"/>
<rect x="1657" y="546" width="253" height="22" rx="4" class="b"/><path d="M1740.500 546v22M1825.500 546v22" stroke="#3c3c3c"/>
<text x="1698" y="561" class="m">Assign</text><text x="1782" y="561" class="m">Select</text><text x="1867" y="561" class="m">Deselect</text>
<rect x="1657" y="575" width="206" height="22" rx="4" class="b"/><path d="M1661 575h32v22h-32a4 4 0 0 1-4-4v-14a4 4 0 0 1 4-4z" fill="#282828"/><rect x="1693" y="575" width="98" height="22" class="f"/><use href="#mat" x="1669" y="586"/><use href="#cd" x="1686" y="587"/><text x="1703" y="590" textLength="62">straw-hat</text>
<path d="M1800 580h13v7q0 4-6.500 7-6.500-3-6.500-7z" fill="none" stroke="#888" stroke-width="1.300" transform="translate(-.5 -.5)"/><path d="M1815.500 575v22M1840.500 575v22" stroke="#3c3c3c"/><use href="#copy" x="1827" y="586"/><path d="M1847 581 1856 590M1856 581 1847 590" stroke="#ccc" stroke-width="1.400"/>
<rect x="1874" y="575" width="36" height="22" rx="4" class="k"/><g transform="translate(1888 586)"><path d="M-7-6H7L0 7Z" fill="none" stroke="#ddd" stroke-width="1.500"/><rect x="-9" y="-8" width="4" height="4" fill="#282828" stroke="#ddd"/><rect x="5" y="-8" width="4" height="4" fill="#282828" stroke="#ddd"/><rect x="-2" y="5" width="4" height="4" fill="#282828" stroke="#ddd"/></g><use href="#cd" x="1903" y="587"/>
<rect x="1656" y="610" width="252" height="28" rx="5" fill="#3d3d3d"/><use href="#cr" x="1671" y="624"/><text x="1682" y="629">Preview</text><use href="#grip" x="1887" y="621"/>
<path d="M1661 642h242a5 5 0 0 1 5 5V1012H1656V647a5 5 0 0 1 5-5z" fill="#3d3d3d"/><use href="#cv" transform="translate(1671 656)"/><text x="1682" y="661">Surface</text><use href="#grip" x="1887" y="653"/>
<!-- surface rows -->
<g>
<text x="1743" y="696" class="e">Surface</text><rect x="1756" y="681" width="119" height="22" rx="4" fill="#282828"/><circle cx="1766" cy="692" r="4.500" fill="#63c763" stroke="#111"/><text x="1780" y="696">Principled BS...</text>
<use href="#cr" x="1671" y="733"/><circle cx="1687" cy="733" r="2.300" fill="#ddd"/><text x="1743" y="737" class="e">Base ...</text><rect x="1756" y="722" width="119" height="22" rx="4" fill="#2f3f5c"/><circle cx="1766" cy="733" r="4.500" fill="#c7c729" stroke="#111"/><text x="1780" y="737">Base Color</text>
<use href="#cr" x="1673" y="762"/><circle cx="1692" cy="762" r="2.300" fill="#ddd"/><text x="1743" y="766" class="e">Meta...</text><rect x="1756" y="751" width="119" height="22" rx="4" fill="#282828"/><circle cx="1766" cy="762" r="4.500" fill="#a1a1a1" stroke="#111"/><text x="1780" y="766">Metallic</text>
<use href="#cr" x="1671" y="791"/><circle cx="1687" cy="791" r="2.300" fill="#ddd"/><text x="1743" y="795" class="e">Roug...</text><rect x="1756" y="780" width="119" height="22" rx="4" fill="#282828"/><circle cx="1766" cy="791" r="4.500" fill="#a1a1a1" stroke="#111"/><text x="1780" y="795">Roughness</text>
<text x="1743" y="824" class="e">IOR</text><rect x="1756" y="809" width="119" height="22" rx="4" class="b"/><path d="M1760 809h17v22h-17a4 4 0 0 1-4-4v-14a4 4 0 0 1 4-4z" fill="#282828"/><circle cx="1766" cy="820" r="4.500" fill="#a1a1a1" stroke="#111"/><text x="1826" y="824" class="m" style="letter-spacing:.7px">1.450</text><circle cx="1888" cy="820" r="2.300" fill="#ddd"/>
<text x="1743" y="853" class="e">Alpha</text><rect x="1756" y="838" width="119" height="22" rx="4" fill="#4772b3"/><path d="M1760 838h17v22h-17a4 4 0 0 1-4-4v-14a4 4 0 0 1 4-4z" fill="#282828"/><circle cx="1766" cy="849" r="4.500" fill="#a1a1a1" stroke="#111"/><text x="1826" y="853" class="m w" style="letter-spacing:.7px">1.000</text><circle cx="1888" cy="849" r="2.300" fill="#ddd"/>
<use href="#cr" x="1673" y="878"/><circle cx="1693" cy="878" r="2.300" fill="#ddd"/><text x="1743" y="882" class="e">Nor...</text><rect x="1756" y="867" width="119" height="22" rx="4" fill="#282828"/><circle cx="1766" cy="878" r="4.500" fill="#6363c7" stroke="#111"/><text x="1780" y="882">Normal Map</text>
<use href="#cr" x="1676" y="907"/><text x="1696" y="911">Diffuse</text>
<use href="#cr" x="1676" y="936"/><text x="1696" y="940">Subsurface</text>
<use href="#cr" x="1676" y="965"/><text x="1696" y="969">Specular</text>
<use href="#cr" x="1676" y="994"/><text x="1696" y="998">Transmission</text>
</g>
<rect x="1913" y="396" width="3" height="380" rx="1.500" fill="#4a4a4a"/>

<!-- timeline -->
<rect x="2" y="942" width="1609" height="70" rx="6" fill="#2e2e2e"/>
<rect x="3" y="973" width="1607" height="38" fill="#222"/>
<rect x="10" y="947" width="37" height="22" rx="4" class="k"/><circle cx="23" cy="958" r="7.500" fill="#eee"/><path d="M23 952v6l-3 5" stroke="#333" stroke-width="1.500" fill="none"/><use href="#cd" x="40" y="959"/>
<rect x="53" y="947" width="158" height="22" rx="4" fill="#2a2a2a" stroke="#363636"/><path d="M138.500 947v22" stroke="#3a3a3a"/><text x="62" y="962.500">Playback</text><use href="#cd" x="131" y="959"/><text x="147" y="962.500">Keying</text><use href="#cd" x="204" y="959"/><text x="223" y="962.500">View</text><text x="272" y="962.500">Marker</text>
<rect x="696" y="947" width="47" height="22" rx="4" fill="#3a3a3a"/><path d="M700 947h19v22h-19a4 4 0 0 1-4-4v-14a4 4 0 0 1 4-4z" class="b"/><circle cx="707" cy="958" r="6" fill="none" stroke="#999" stroke-width="1.500"/><use href="#cd" x="730" y="959"/>
<rect x="748" y="947" width="143" height="22" rx="4" class="b"/>
<g fill="#eee"><rect x="756" y="952" width="2" height="12"/><path d="M767 952v12l-7-6z"/><path d="M778 952l-5 6 5 6 5-6zM788 953v10l-4-5z"/><path d="M811 950v16l-9-8z"/><path d="M827 950v16l10-8z"/><path d="M843 953v10l4-5zM853 952l-5 6 5 6 5-6z"/><path d="M873 952v12l7-6z"/><rect x="882" y="952" width="2" height="12"/></g>
<rect x="1277" y="947" width="87" height="22" rx="4" class="b"/><text x="1319" y="962.500" class="m">1</text>
<rect x="1370" y="947" width="233" height="22" rx="4" class="b"/><path d="M1393.500 947v22M1499.500 947v22" stroke="#3c3c3c"/><circle cx="1382" cy="959" r="7" fill="none" stroke="#ddd" stroke-width="1.300"/><path d="M1382 954v5l2 2M1379 950h6" stroke="#ddd" fill="none"/>
<text x="1413" y="962.500">Start</text><text x="1482" y="962.500" class="e">1</text><text x="1519" y="962.500">End</text><text x="1594" y="962.500" class="e">250</text>
<g transform="translate(.5 -.5)">
<text x="113" y="992" class="m">10</text><text x="174" y="992" class="m">20</text><text x="233" y="992" class="m">30</text><text x="293" y="992" class="m">40</text><text x="353" y="992" class="m">50</text><text x="413" y="992" class="m">60</text><text x="473" y="992" class="m">70</text><text x="533" y="992" class="m">80</text><text x="593" y="992" class="m">90</text><text x="653" y="992" class="m">100</text><text x="712" y="992" class="m">110</text><text x="772" y="992" class="m">120</text><text x="832" y="992" class="m">130</text><text x="892" y="992" class="m">140</text><text x="952" y="992" class="m">150</text><text x="1012" y="992" class="m">160</text><text x="1072" y="992" class="m">170</text><text x="1131" y="992" class="m">180</text><text x="1191" y="992" class="m">190</text><text x="1251" y="992" class="m">200</text><text x="1311" y="992" class="m">210</text><text x="1371" y="992" class="m">220</text><text x="1431" y="992" class="m">230</text><text x="1491" y="992" class="m">240</text><text x="1551" y="992" class="m">250</text>
</g>
<rect x="9" y="1001" width="1591" height="10" rx="5" fill="#545454"/><circle cx="15" cy="1006" r="3.500" fill="#3a3a3a"/><circle cx="1595" cy="1006" r="3.500" fill="#3a3a3a"/>
<path d="M60 996v16" stroke="#4772b3" stroke-width="1.500"/><rect x="45" y="976" width="30" height="21" rx="4" fill="#4772b3"/><text x="60" y="991" class="m w">1</text>
<path d="M3 1000l3 5-3 5" fill="none" stroke="#888"/><path d="M1607 1000l-3 5 3 5" fill="none" stroke="#888"/>

<!-- status bar -->
<g transform="translate(19 1027)"><rect x="-7" y="-9" width="12" height="18" rx="4" fill="none" stroke="#b0b0b0"/><rect x="-7" y="-9" width="6" height="8" rx="2" fill="#d0d0d0"/><path d="M7-8v5" stroke="#b0b0b0"/></g>
<text x="34" y="1032" class="d">Resize</text>
<g transform="translate(93 1027)"><rect x="-6" y="-9" width="12" height="18" rx="4" fill="none" stroke="#b0b0b0"/><rect x="0" y="-9" width="6" height="8" rx="2" fill="#d0d0d0"/></g>
<text x="106" y="1032" class="d">Options</text>
<text x="849" y="1032" class="d" textLength="67">straw-hat |</text>
<text x="923" y="1032" class="d" textLength="148">Verts:13,242/13,242 |</text>
<text x="1074.500" y="1032" class="d" textLength="152">Edges:26,480/26,480 |</text>
<text x="1232.500" y="1032" class="d" textLength="152">Faces:13,240/13,240 |</text>
<text x="1390" y="1032" class="d" textLength="81">Tris:26,480 |</text>
<text x="1477" y="1032" class="d" textLength="81">Objects:1/1 |</text>
<text x="1564" y="1032" class="d" textLength="127">Memory: 83.9 MiB |</text>
<text x="1696" y="1032" class="d" textLength="135">VRAM: 1.6/12.0 GiB |</text>
<g transform="translate(1847 1027)" fill="none" stroke="#aaa" stroke-width="1"><circle r="8.500"/><ellipse rx="4" ry="8.500"/><path d="M-8-3H8M-8 3H8"/></g><text x="1854" y="1038" class="d" style="font-size:10px">2</text>
<text x="1862" y="1032" class="d" textLength="41">| 4.3.2</text>
</svg>
<script>
(function(){
var NS='http://www.w3.org/2000/svg',g=document.getElementById('hat'),O='#ff8a10',PI=Math.PI;
function add(tag,a){var e=document.createElementNS(NS,tag);for(var k in a)e.setAttribute(k,a[k]);g.appendChild(e);return e}
function f(n){return n.toFixed(1)}
function P(t,u,a){var top=469+204*t,bot=755-48*u,mid=612+56*t,cx=843-8*t,rx=721-471*t,s=Math.sin(a);
 return [cx+rx*Math.cos(a),mid+(s<0?(mid-top)*s:(bot-mid)*s)]}
function Dm(ph,l){return [836+238*Math.cos(ph)*Math.sin(l),470-119*Math.sin(ph)-5*Math.cos(ph)*Math.cos(l)]}
/* dome */
add('path',{d:'M598 472A238 121 0 0 1 1074 472Z',fill:'url(#dome)'});
var d='',i,j,k,p;
for(i=-24;i<=24;i++){var l=i*3.75*PI/180,top=(i%4==0)?14:(i%2==0?12:10);for(j=0;j<=top;j++){p=Dm(j/14*PI/2,l);d+=(j?'L':'M')+f(p[0])+' '+f(p[1])}}
add('path',{d:d,fill:'none',stroke:O,'stroke-width':'.85',opacity:'.58'});
[.06,.15,.31,.48,.65,.8,.92].forEach(function(s){var ph=Math.asin(s),q='';for(i=0;i<=40;i++){p=Dm(ph,(i/40-.5)*PI);q+=(i?'L':'M')+f(p[0])+' '+f(p[1])}
 add('path',{d:q,fill:'none',stroke:O,'stroke-width':'4','stroke-linecap':'round','stroke-dasharray':'0 15'});
 add('path',{d:q,fill:'none',stroke:O,'stroke-width':'.6',opacity:'.3'})});
add('path',{d:'M598 470A238 120 0 0 1 1074 470',fill:'none',stroke:O,'stroke-width':'2.600','stroke-dasharray':'1 4'});
add('path',{d:'M754 358Q738 400 733 458',fill:'none',stroke:'#e0541c','stroke-width':'1.800'});
/* rim + underside */
add('ellipse',{cx:843,cy:606,rx:722,ry:150,fill:'#c69c76'});
add('ellipse',{cx:843,cy:606,rx:722,ry:150,fill:'none',stroke:O,'stroke-width':'1.600'});
add('ellipse',{cx:843,cy:612,rx:721,ry:143,fill:'url(#under)'});
add('path',{d:'M330 510A722 146 0 0 1 1200 478',fill:'none',stroke:'#c8501c','stroke-width':'1','stroke-dasharray':'7 6',opacity:'.8'});
var ts=[0,.125,.25,.375,.5,.625,.75,.78,.81,.835,.86,.885,.905,.925,.945,.96,.975,.99,1],angs=[],n=ts.length-1;
for(i=0;i<38;i++)angs.push(PI+i*PI/38);
for(i=0;i<66;i++)angs.push(i*PI/66);
var m='';
ts.forEach(function(t,ix){for(j=0;j<=120;j++){p=P(t,ix/n,j/120*2*PI);m+=(j?'L':'M')+f(p[0])+' '+f(p[1])}m+='Z'});
add('path',{d:m,fill:'none',stroke:O,'stroke-width':'.95'});
var r='';
angs.forEach(function(a){ts.forEach(function(t,ix){p=P(t,ix/n,a);r+=(ix?'L':'M')+f(p[0])+' '+f(p[1])})});
add('path',{d:r,fill:'none',stroke:O,'stroke-width':'.85',opacity:'.85'});
var dots='';
for(i=0;i<angs.length;i++){if(i>=38&&i%2)continue;for(k=0;k<7;k++){p=P(ts[k],k/n,angs[i]);dots+='M'+f(p[0])+' '+f(p[1])+'h0'}}
add('path',{d:dots,stroke:O,'stroke-width':'2.100','stroke-linecap':'round',fill:'none'});
add('ellipse',{cx:843,cy:612,rx:721,ry:143,fill:'none',stroke:O,'stroke-width':'1.800'});
/* rim ticks */
var tk='';
for(i=0;i<38;i++){var a=angs[i],ox=843+722*Math.cos(a),oy=606+150*Math.sin(a);var u=[843+721*Math.cos(a),612+143*Math.sin(a)];tk+='M'+f(ox)+' '+f(oy-1)+'L'+f(u[0])+' '+f(u[1]+1)}
add('path',{d:tk,stroke:O,'stroke-width':'3.200',fill:'none','stroke-linecap':'round'});
/* seam on underside */
add('path',{d:'M454 495Q530 550 590 590T657 625',fill:'none',stroke:'#e0541c','stroke-width':'1.300'});
add('path',{d:'M357 497 657 625',stroke:'#7f8a30','stroke-width':'1.200',opacity:'.7'});
/* hole */
add('path',{d:'M585 670C588 645 670 623 835 621S1078 640 1087 668C1082 692 980 709 835 709S590 698 585 670Z',fill:'url(#hole)'});
var v='';
for(i=-20;i<=20;i++){var l2=i*4.4*PI/180;var x=836+250*Math.sin(l2);var c=Math.cos(l2);v+='M'+f(x)+' '+f(664-42*c)+'L'+f(x)+' '+f(667+40*c)}
add('path',{d:v,stroke:O,'stroke-width':'.85',fill:'none',opacity:'.55'});
[-.58,-.02,.4,.86].forEach(function(s){var q='';for(i=0;i<=48;i++){var a=(i/48-.5)*PI;var Y=668+42*s*Math.cos(a);q+=(i?'L':'M')+f(836+250*Math.sin(a))+' '+f(Y)}
 add('path',{d:q,fill:'none',stroke:O,'stroke-width':'3.600','stroke-linecap':'round','stroke-dasharray':'0 15'});
 add('path',{d:q,fill:'none',stroke:O,'stroke-width':'.6',opacity:'.4'})});
add('path',{d:'M585 670C588 645 670 623 835 621S1078 640 1087 668',fill:'none',stroke:O,'stroke-width':'1.300'});
add('path',{d:'M585 670C590 698 710 709 835 709S1082 692 1087 668',fill:'none',stroke:O,'stroke-width':'2'});
var bt='';
for(i=0;i<=44;i++){var a=i/44*PI,X=836+252*Math.cos(a),Y=668+40*Math.sin(a);bt+='M'+f(X)+' '+f(Y-3)+'L'+f(X)+' '+f(Y+6)}
add('path',{d:bt,stroke:O,'stroke-width':'1.800',fill:'none'});
add('path',{d:'M900 625 905 703',stroke:'#e0541c','stroke-width':'1.800',fill:'none'});
})();
</script>
</body></html>
